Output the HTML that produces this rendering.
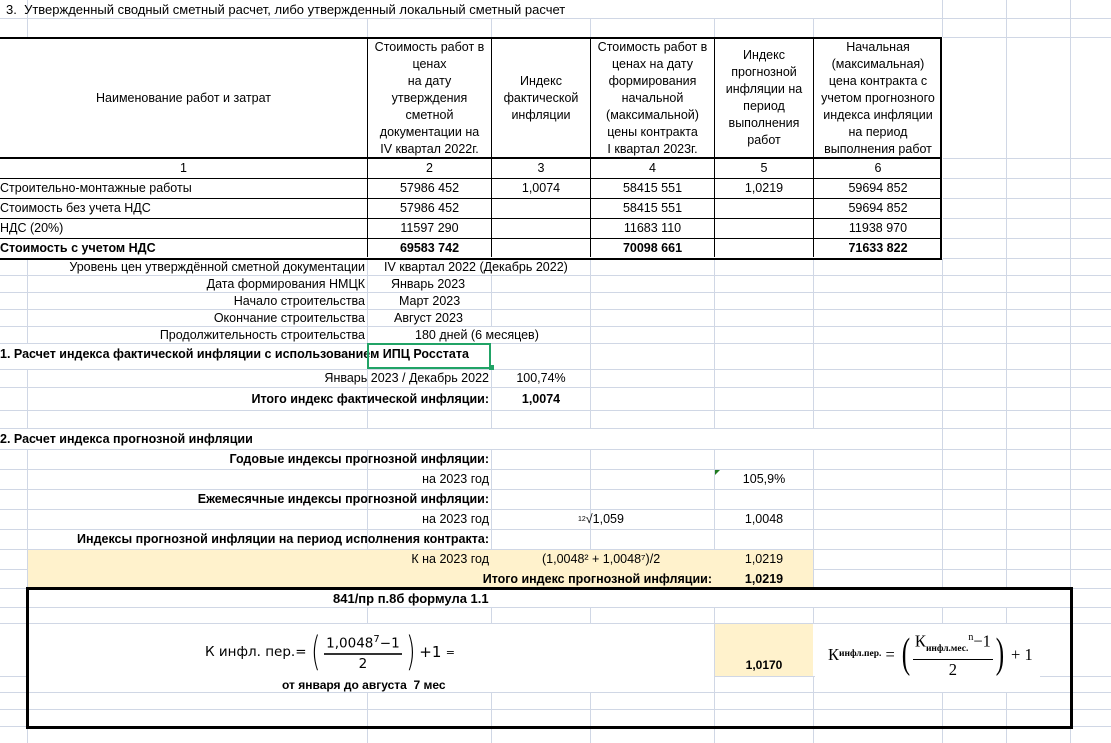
<!DOCTYPE html>
<html><head><meta charset="utf-8"><style>
body{margin:0;width:1111px;height:743px;position:relative;background:#fff;overflow:hidden;font-family:"Liberation Sans",Arial,sans-serif;font-size:12.5px;color:#000}
.c{position:absolute;display:flex;align-items:center;white-space:nowrap;line-height:17px}
.r{justify-content:flex-end}.m{justify-content:center;text-align:center}
.b{font-weight:bold}
.w{position:absolute;background:#fff}
.y{position:absolute;background:#fff2cc}
.hl{position:absolute;background:#000}
</style></head><body>
<svg style="position:absolute;left:0;top:0" width="1111" height="743">
<g stroke="#d0d7e5" stroke-width="1">
<line x1="27.5" y1="0" x2="27.5" y2="743"/><line x1="367.5" y1="0" x2="367.5" y2="743"/><line x1="491.5" y1="0" x2="491.5" y2="743"/><line x1="590.5" y1="0" x2="590.5" y2="743"/><line x1="714.5" y1="0" x2="714.5" y2="743"/><line x1="813.5" y1="0" x2="813.5" y2="743"/><line x1="942.5" y1="0" x2="942.5" y2="743"/><line x1="1006.5" y1="0" x2="1006.5" y2="743"/><line x1="1070.5" y1="0" x2="1070.5" y2="743"/>
<line x1="0" y1="18.5" x2="1111" y2="18.5"/><line x1="0" y1="37.5" x2="1111" y2="37.5"/><line x1="0" y1="158.5" x2="1111" y2="158.5"/><line x1="0" y1="178.5" x2="1111" y2="178.5"/><line x1="0" y1="198.5" x2="1111" y2="198.5"/><line x1="0" y1="218.5" x2="1111" y2="218.5"/><line x1="0" y1="238.5" x2="1111" y2="238.5"/><line x1="0" y1="258.5" x2="1111" y2="258.5"/><line x1="0" y1="275.5" x2="1111" y2="275.5"/><line x1="0" y1="292.5" x2="1111" y2="292.5"/><line x1="0" y1="309.5" x2="1111" y2="309.5"/><line x1="0" y1="326.5" x2="1111" y2="326.5"/><line x1="0" y1="343.5" x2="1111" y2="343.5"/><line x1="0" y1="369.5" x2="1111" y2="369.5"/><line x1="0" y1="387.5" x2="1111" y2="387.5"/><line x1="0" y1="410.5" x2="1111" y2="410.5"/><line x1="0" y1="428.5" x2="1111" y2="428.5"/><line x1="0" y1="449.5" x2="1111" y2="449.5"/><line x1="0" y1="469.5" x2="1111" y2="469.5"/><line x1="0" y1="489.5" x2="1111" y2="489.5"/><line x1="0" y1="509.5" x2="1111" y2="509.5"/><line x1="0" y1="529.5" x2="1111" y2="529.5"/><line x1="0" y1="549.5" x2="1111" y2="549.5"/><line x1="0" y1="569.5" x2="1111" y2="569.5"/><line x1="0" y1="588.5" x2="1111" y2="588.5"/><line x1="0" y1="607.5" x2="1111" y2="607.5"/><line x1="0" y1="623.5" x2="1111" y2="623.5"/><line x1="0" y1="676.5" x2="1111" y2="676.5"/><line x1="0" y1="692.5" x2="1111" y2="692.5"/><line x1="0" y1="709.5" x2="1111" y2="709.5"/><line x1="0" y1="726.5" x2="1111" y2="726.5"/>
</g></svg>
<!-- white overflow areas -->
<div class="w" style="left:28px;top:0;width:914px;height:18px"></div>
<div class="w" style="left:0;top:37px;width:943px;height:222px"></div>
<div class="w" style="left:368px;top:259px;width:222px;height:16px"></div>
<div class="w" style="left:368px;top:327px;width:222px;height:16px"></div>
<div class="w" style="left:0;top:344px;width:590px;height:25px"></div>
<div class="w" style="left:0;top:429px;width:942px;height:20px"></div>
<div class="w" style="left:28px;top:589px;width:1042px;height:18px"></div>
<div class="w" style="left:28px;top:624px;width:686px;height:68px"></div>
<div class="w" style="left:715px;top:624px;width:355px;height:52px"></div>
<div class="w" style="left:815px;top:676px;width:225px;height:16px"></div>
<div class="y" style="left:28px;top:550px;width:785px;height:38px"></div>
<div class="y" style="left:715px;top:624px;width:98px;height:52px"></div>

<div class="c" style="left:6px;top:0;height:18px;font-size:13px">3.&nbsp; Утвержденный сводный сметный расчет, либо утвержденный локальный сметный расчет</div>

<!-- table borders -->
<div style="position:absolute;left:-3px;top:37px;width:943px;height:219px;border:2px solid #000;border-left:none"></div>
<div class="hl" style="left:0;top:157px;width:942px;height:2px"></div>
<div class="hl" style="left:0;top:178px;width:942px;height:1px"></div>
<div class="hl" style="left:0;top:198px;width:942px;height:1px"></div>
<div class="hl" style="left:0;top:218px;width:942px;height:1px"></div>
<div class="hl" style="left:0;top:238px;width:942px;height:1px"></div>
<div class="hl" style="left:367px;top:38px;width:1px;height:219px"></div>
<div class="hl" style="left:491px;top:38px;width:1px;height:219px"></div>
<div class="hl" style="left:590px;top:38px;width:1px;height:219px"></div>
<div class="hl" style="left:714px;top:38px;width:1px;height:219px"></div>
<div class="hl" style="left:813px;top:38px;width:1px;height:219px"></div>

<div class="c m" style="left:0;top:39px;width:367px;height:118px">Наименование работ и затрат</div>
<div class="c m" style="left:368px;top:39px;width:123px;height:118px">Стоимость работ в<br>ценах<br>на дату<br>утверждения<br>сметной<br>документации на<br>IV квартал 2022г.</div>
<div class="c m" style="left:492px;top:39px;width:98px;height:118px">Индекс<br>фактической<br>инфляции</div>
<div class="c m" style="left:591px;top:39px;width:123px;height:118px">Стоимость работ в<br>ценах на дату<br>формирования<br>начальной<br>(максимальной)<br>цены контракта<br>I квартал 2023г.</div>
<div class="c m" style="left:715px;top:39px;width:98px;height:118px">Индекс<br>прогнозной<br>инфляции на<br>период<br>выполнения<br>работ</div>
<div class="c m" style="left:814px;top:39px;width:128px;height:118px">Начальная<br>(максимальная)<br>цена контракта с<br>учетом прогнозного<br>индекса инфляции<br>на период<br>выполнения работ</div>

<div class="c m" style="left:0;top:159px;width:367px;height:19px">1</div>
<div class="c m" style="left:368px;top:159px;width:123px;height:19px">2</div>
<div class="c m" style="left:492px;top:159px;width:98px;height:19px">3</div>
<div class="c m" style="left:591px;top:159px;width:123px;height:19px">4</div>
<div class="c m" style="left:715px;top:159px;width:98px;height:19px">5</div>
<div class="c m" style="left:814px;top:159px;width:128px;height:19px">6</div>

<div class="c" style="left:0;top:179px;height:19px">Строительно-монтажные работы</div>
<div class="c m" style="left:368px;top:179px;width:123px;height:19px">57986 452</div>
<div class="c m" style="left:492px;top:179px;width:98px;height:19px">1,0074</div>
<div class="c m" style="left:591px;top:179px;width:123px;height:19px">58415 551</div>
<div class="c m" style="left:715px;top:179px;width:98px;height:19px">1,0219</div>
<div class="c m" style="left:814px;top:179px;width:128px;height:19px">59694 852</div>

<div class="c" style="left:0;top:199px;height:19px">Стоимость без учета НДС</div>
<div class="c m" style="left:368px;top:199px;width:123px;height:19px">57986 452</div>
<div class="c m" style="left:591px;top:199px;width:123px;height:19px">58415 551</div>
<div class="c m" style="left:814px;top:199px;width:128px;height:19px">59694 852</div>

<div class="c" style="left:0;top:219px;height:19px">НДС (20%)</div>
<div class="c m" style="left:368px;top:219px;width:123px;height:19px">11597 290</div>
<div class="c m" style="left:591px;top:219px;width:123px;height:19px">11683 110</div>
<div class="c m" style="left:814px;top:219px;width:128px;height:19px">11938 970</div>

<div class="c b" style="left:0;top:239px;height:18px">Стоимость с учетом НДС</div>
<div class="c m b" style="left:368px;top:239px;width:123px;height:18px">69583 742</div>
<div class="c m b" style="left:591px;top:239px;width:123px;height:18px">70098 661</div>
<div class="c m b" style="left:814px;top:239px;width:128px;height:18px">71633 822</div>

<div class="c r" style="left:28px;top:259px;width:337px;height:17px">Уровень цен утверждённой сметной документации</div>
<div class="c" style="left:384px;top:259px;height:17px">IV квартал 2022 (Декабрь 2022)</div>
<div class="c r" style="left:28px;top:276px;width:337px;height:17px">Дата формирования НМЦК</div>
<div class="c" style="left:391px;top:276px;height:17px">Январь 2023</div>
<div class="c r" style="left:28px;top:293px;width:337px;height:17px">Начало строительства</div>
<div class="c" style="left:399px;top:293px;height:17px">Март 2023</div>
<div class="c r" style="left:28px;top:310px;width:337px;height:17px">Окончание строительства</div>
<div class="c" style="left:394px;top:310px;height:17px">Август 2023</div>
<div class="c r" style="left:28px;top:327px;width:337px;height:17px">Продолжительность строительства</div>
<div class="c" style="left:415px;top:327px;height:17px">180 дней (6 месяцев)</div>

<div class="c b" style="left:0;top:344px;height:20px">1. Расчет индекса фактической инфляции с использованием ИПЦ Росстата</div>
<div style="position:absolute;left:367px;top:343px;width:120px;height:22px;border:2px solid #21a366"></div>
<div style="position:absolute;left:489px;top:365px;width:5px;height:5px;background:#21a366"></div>

<div class="c r" style="left:28px;top:370px;width:461px;height:17px">Январь 2023 / Декабрь 2022</div>
<div class="c m" style="left:492px;top:370px;width:98px;height:17px">100,74%</div>
<div class="c r b" style="left:28px;top:388px;width:461px;height:22px">Итого индекс фактической инфляции:</div>
<div class="c m b" style="left:492px;top:388px;width:98px;height:22px">1,0074</div>

<div class="c b" style="left:0;top:429px;height:20px">2. Расчет индекса прогнозной инфляции</div>
<div class="c r b" style="left:28px;top:450px;width:461px;height:19px">Годовые индексы прогнозной инфляции:</div>
<div class="c r" style="left:28px;top:470px;width:461px;height:19px">на 2023 год</div>
<div style="position:absolute;left:715px;top:470px;width:0;height:0;border-top:5px solid #1f7a1f;border-right:5px solid transparent"></div>
<div class="c m" style="left:715px;top:470px;width:98px;height:19px">105,9%</div>
<div class="c r b" style="left:28px;top:490px;width:461px;height:19px">Ежемесячные индексы прогнозной инфляции:</div>
<div class="c r" style="left:28px;top:510px;width:461px;height:19px">на 2023 год</div>
<div class="c" style="left:578px;top:510px;height:19px"><sup style="font-size:7px">12</sup>√1,059</div>
<div class="c m" style="left:715px;top:510px;width:98px;height:19px">1,0048</div>
<div class="c r b" style="left:28px;top:530px;width:461px;height:19px">Индексы прогнозной инфляции на период исполнения контракта:</div>
<div class="c r" style="left:28px;top:550px;width:461px;height:19px">К на 2023 год</div>
<div class="c" style="left:542px;top:550px;height:19px">(1,0048² + 1,0048⁷)/2</div>
<div class="c m" style="left:715px;top:550px;width:98px;height:19px">1,0219</div>
<div class="c r b" style="left:28px;top:570px;width:684px;height:18px">Итого индекс прогнозной инфляции:</div>
<div class="c m b" style="left:715px;top:570px;width:98px;height:18px">1,0219</div>

<div style="position:absolute;left:26px;top:587px;width:1041px;height:136px;border:3px solid #000"></div>
<div class="c b" style="left:333px;top:589px;height:18px;font-family:'Liberation Sans Narrow','Liberation Sans',sans-serif;font-size:13px">841/пр п.8б формула 1.1</div>

<div class="c" style="left:205px;top:628px;height:48px;font-family:'DejaVu Sans','Liberation Sans',sans-serif;font-size:13.5px">К инфл. пер.=
<span style="font-size:40px;font-weight:100;margin:0 1px;transform:scaleX(.6);display:inline-block">(</span>
<span style="display:inline-flex;flex-direction:column;align-items:center;line-height:18px"><span style="border-bottom:2px solid #333;padding:0 2px">1,0048<sup style="font-size:10px">7</sup>−1</span><span>2</span></span>
<span style="font-size:40px;font-weight:100;margin:0 1px;transform:scaleX(.6);display:inline-block">)</span><span style="font-size:15px">+1</span>&nbsp;<span style="font-size:11px">=</span></div>
<div class="c b" style="left:282px;top:677px;height:16px;font-size:12px">от января до августа&nbsp; 7 мес</div>
<div class="c m b" style="left:715px;top:655px;width:98px;height:21px;font-size:12px">1,0170</div>

<div class="c" style="left:828px;top:630px;height:48px;font-family:'Liberation Serif',serif;font-size:16.5px">К<sub style="font-size:9.5px;font-weight:bold">инфл.пер.</sub>&nbsp;=&nbsp;<span style="font-size:42px;transform:scaleX(.6);display:inline-block">(</span><span style="display:inline-flex;flex-direction:column;align-items:center;line-height:20px"><span style="border-bottom:1px solid #000;padding:0 2px">К<sub style="font-size:9.5px;font-weight:bold">инфл.мес.</sub><sup style="font-size:10px">n</sup>−1</span><span>2</span></span><span style="font-size:42px;transform:scaleX(.6);display:inline-block">)</span>&nbsp;+ 1</div>
</body></html>
